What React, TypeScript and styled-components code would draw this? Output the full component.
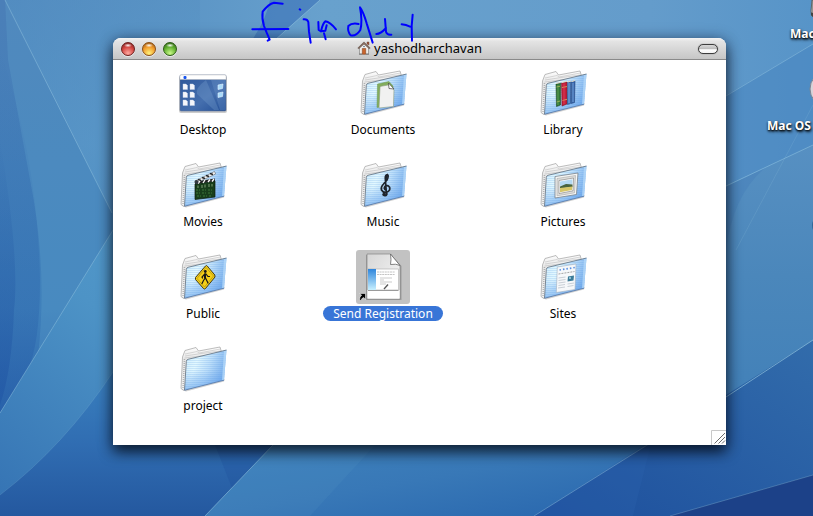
import React from "react";
import styled, { createGlobalStyle } from "styled-components";

const GlobalStyle = createGlobalStyle`
  * { box-sizing: border-box; }
  html, body { margin: 0; height: 100%; }
  body { font-family: "Noto Sans", "Open Sans", sans-serif; font-size: 12px; overflow: hidden; }
  #root { height: 100%; }
`;

const Desktop = styled.main`
  position: relative;
  min-height: 100vh;
  overflow: hidden;
  padding: 38px 87px 71px 113px;
  background: #3b78b6;
`;

const WallpaperArt = styled.svg`
  position: absolute;
  inset: 0;
  width: 100%;
  height: 100%;
`;

const HiddenDefs = styled.svg`
  position: absolute;
`;

const Window = styled.section`
  position: relative;
  background: #fff;
  border-radius: 8px 8px 0 0;
  box-shadow: 0 7px 14px rgba(0, 0, 0, 0.65), 0 2px 16px rgba(0, 10, 40, 0.4);
`;

const TitleBar = styled.header`
  display: grid;
  grid-template-columns: 1fr auto 1fr;
  align-items: center;
  height: 22px;
  padding: 0 8px;
  border-bottom: 1px solid #8a8a8a;
  border-radius: 8px 8px 0 0;
  background: linear-gradient(#f4f4f4, #e4e4e4 15%, #c6c6c6);
`;

const Lights = styled.div`
  display: flex;
  gap: 7px;
`;

const Light = styled.button<{ $dark: string; $mid: string; $glow: string }>`
  width: 14px;
  height: 14px;
  padding: 0;
  border: 1px solid ${(p) => p.$dark};
  border-radius: 50%;
  background:
    radial-gradient(ellipse 4px 2px at 50% 20%, rgba(255, 255, 255, 0.95), rgba(255, 255, 255, 0) 100%),
    radial-gradient(circle at 50% 85%, ${(p) => p.$glow}, ${(p) => p.$mid} 55%, ${(p) => p.$dark} 100%);
  box-shadow: 0 1px 0 rgba(255, 255, 255, 0.6);
`;

const Title = styled.h1`
  display: flex;
  align-items: center;
  gap: 3px;
  margin: 0;
  padding-bottom: 2px;
  font-size: 13px;
  line-height: 18px;
  font-weight: 400;
  color: #000;
`;

const ToolbarPill = styled.button`
  justify-self: end;
  width: 20px;
  height: 10px;
  padding: 0;
  border: 1px solid #3d3d3d;
  border-radius: 5px;
  background: linear-gradient(#d9d9d9, #bdbdbd 45%, #fff 60%, #f4f4f4);
  box-shadow: 0 0 1px #555;
`;

const IconGrid = styled.ul`
  display: grid;
  grid-template-columns: repeat(auto-fill, 180px);
  row-gap: 21px;
  margin: 0;
  padding: 6px 0 32px;
  list-style: none;
`;

const Cell = styled.li`
  display: flex;
  justify-content: center;
`;

const FileButton = styled.button`
  display: flex;
  flex-direction: column;
  align-items: center;
  gap: 2px;
  padding: 0;
  border: 0;
  background: none;
  font: inherit;
`;

const IconFrame = styled.span<{ $selected?: boolean }>`
  display: block;
  width: 54px;
  height: 54px;
  border-radius: 3px;
  background: ${(p) => (p.$selected ? "#c2c2c2" : "transparent")};
`;

const FileLabel = styled.span<{ $selected?: boolean }>`
  padding: 0 10px;
  border-radius: 8px;
  line-height: 15px;
  white-space: nowrap;
  color: ${(p) => (p.$selected ? "#fff" : "#000")};
  background: ${(p) => (p.$selected ? "#3875d7" : "transparent")};
`;

const ResizeCorner = styled.svg`
  position: absolute;
  right: 0;
  bottom: 0;
`;

const Scribble = styled.svg`
  position: absolute;
  left: 250px;
  top: 0;
  pointer-events: none;
`;

const Volume = styled.div<{ $top: number; $left: number }>`
  position: absolute;
  top: ${(p) => p.$top}px;
  left: ${(p) => p.$left}px;
  line-height: 16px;
  font-weight: 700;
  white-space: nowrap;
  color: #fff;
  text-shadow: 0 1px 2px #000, 1px 2px 3px rgba(0, 0, 0, 0.8);
`;

const VolumeArt = styled.svg`
  position: absolute;
  right: 0;
  top: 0;
`;

function Wallpaper() {
  return (
    <WallpaperArt viewBox="0 0 813 516" preserveAspectRatio="none" aria-hidden="true">
      <defs>
        <linearGradient id="wTop" x1="0" y1="0" x2="1" y2="0">
          <stop offset="0" stopColor="#4c86bd" />
          <stop offset=".4" stopColor="#68a1cd" />
          <stop offset=".8" stopColor="#649ccb" />
          <stop offset="1" stopColor="#5794c8" />
        </linearGradient>
        <linearGradient id="wLeft" x1="0" y1="0" x2="0" y2="1">
          <stop offset="0" stopColor="#4b7fb8" />
          <stop offset=".4" stopColor="#4480ba" />
          <stop offset=".75" stopColor="#3f80bb" />
          <stop offset="1" stopColor="#2d68ae" />
        </linearGradient>
        <linearGradient id="wMid" x1="0" y1="0" x2="0" y2="1">
          <stop offset="0" stopColor="#5791c3" />
          <stop offset=".6" stopColor="#5a9aca" />
          <stop offset="1" stopColor="#4f92c5" />
        </linearGradient>
        <linearGradient id="wArc" x1="0" y1="0" x2="0" y2="1">
          <stop offset="0" stopColor="#2a60a8" stopOpacity="0" />
          <stop offset=".5" stopColor="#2860a9" stopOpacity=".5" />
          <stop offset="1" stopColor="#2258a6" stopOpacity=".9" />
        </linearGradient>
        <linearGradient id="wBeam" x1="1" y1="0" x2="0" y2="1">
          <stop offset="0" stopColor="#5a9fcd" />
          <stop offset=".5" stopColor="#4d93c6" />
          <stop offset="1" stopColor="#3472b3" />
        </linearGradient>
        <linearGradient id="wBottomL" x1="0" y1="0" x2="0" y2="1">
          <stop offset="0" stopColor="#3a80be" />
          <stop offset=".5" stopColor="#306db2" />
          <stop offset="1" stopColor="#24589f" />
        </linearGradient>
        <linearGradient id="wBottomM" x1="0" y1="0" x2="1" y2="1">
          <stop offset="0" stopColor="#3f83bd" />
          <stop offset=".5" stopColor="#3878b7" />
          <stop offset="1" stopColor="#2765ad" />
        </linearGradient>
        <linearGradient id="wRight" x1="0" y1="0" x2="0" y2="1">
          <stop offset="0" stopColor="#5790c2" />
          <stop offset=".35" stopColor="#4b87bb" />
          <stop offset="1" stopColor="#3a7bb6" />
        </linearGradient>
        <linearGradient id="wDeep" x1="1" y1="0" x2="0" y2="1">
          <stop offset="0" stopColor="#326cab" />
          <stop offset="1" stopColor="#1d4f9d" />
        </linearGradient>
      </defs>
      <rect width="813" height="516" fill="url(#wTop)" />
      <path d="M5 0 112 213V240L0 413V0Z" fill="url(#wLeft)" />
      <path d="M5 0H200V240H112V213Z" fill="url(#wMid)" opacity=".55" />
      <path d="M0 50Q38 160 40 280Q40 345 27 372L0 413Z" fill="url(#wArc)" opacity=".45" />
      <path d="M0 140Q20 260 14 310Q12 370 0 405Z" fill="url(#wArc)" opacity=".8" />
      <path d="M112 213V232L38 355Q48 270 30 180L8 60 5 0Z" fill="#65a7cf" opacity=".25" />
      <path d="M113 230 0 413V516H205L350 360V230Z" fill="url(#wBeam)" />
      <path d="M113 372Q64 446 0 495V516H330V372Z" fill="url(#wBottomL)" />
      <path d="M273 445 205 516H560L660 440Z" fill="url(#wBottomM)" />
      <path d="M215 445 232 488 273 445Z" fill="#1c4d97" opacity=".25" />
      <path d="M375 445 310 516H205L273 445Z" fill="#65a4cf" opacity=".12" />
      <path d="M270 0H320L275 40H252Q266 20 270 0Z" fill="#3a72b8" opacity=".6" />
      <path d="M720 99 813 44V400H720Z" fill="#4584c0" opacity=".5" />
      <path d="M720 190 813 145V516H720Z" fill="url(#wRight)" />
      <path d="M726 250Q733 195 765 168L726 187Z" fill="#3a74b2" opacity=".25" />
      <path d="M813 340 534 516H813Z" fill="url(#wDeep)" />
      <path d="M652 440 633 516H534Z" fill="#2b62ad" opacity=".35" />
      <path d="M813 475 670 516H813Z" fill="#1c4188" />
      <g fill="none" stroke="#9fd0e6" strokeWidth="1">
        <path d="M5 0 112 213" opacity=".4" />
        <path d="M113 230 0 413" opacity=".4" />
        <path d="M113 372Q64 446 0 495" opacity=".15" />
        <path d="M320 0 275 40" opacity=".5" />
        <path d="M273 445 205 516" opacity=".5" />
        <path d="M660 437 534 516" opacity=".4" />
        <path d="M726 96 813 44" opacity=".4" />
        <path d="M726 186 813 145" opacity=".45" />
        <path d="M736 250 813 105" opacity=".15" />
        <path d="M726 397 813 340" opacity=".6" />
        <path d="M813 475 670 516" opacity=".3" />
      </g>
    </WallpaperArt>
  );
}

function SharedDefs() {
  return (
    <HiddenDefs width="0" height="0" aria-hidden="true">
      <defs>
        <linearGradient id="fFront" x1="0" y1="0" x2="1" y2=".35">
          <stop offset="0" stopColor="#cdebfc" />
          <stop offset=".35" stopColor="#e2f8ff" />
          <stop offset=".65" stopColor="#bcdefa" />
          <stop offset="1" stopColor="#7fb3ee" />
        </linearGradient>
        <linearGradient id="fShade" x1="0" y1="0" x2="0" y2="1">
          <stop offset=".5" stopColor="#5a9bea" stopOpacity="0" />
          <stop offset="1" stopColor="#5a9bea" stopOpacity=".55" />
        </linearGradient>
        <linearGradient id="fBack" x1="0" y1="0" x2="0" y2="1">
          <stop offset="0" stopColor="#fdfdfd" />
          <stop offset=".3" stopColor="#e6e6e6" />
          <stop offset="1" stopColor="#f2f2f2" />
        </linearGradient>
        <pattern id="fLines" width="4" height="2" patternUnits="userSpaceOnUse">
          <rect width="4" height="1" fill="#5b9ce0" opacity=".2" />
        </pattern>
        <linearGradient id="dBlue" x1="0" y1="0" x2="1" y2="1">
          <stop offset="0" stopColor="#2d5699" />
          <stop offset=".6" stopColor="#456fae" />
          <stop offset="1" stopColor="#234f96" />
        </linearGradient>
        <linearGradient id="pPage" x1="0" y1="0" x2="1" y2="1">
          <stop offset="0" stopColor="#d6d6d6" />
          <stop offset="1" stopColor="#fafafa" />
        </linearGradient>
        <linearGradient id="pStrip" x1="0" y1="0" x2="0" y2="1">
          <stop offset="0" stopColor="#2f86dc" />
          <stop offset="1" stopColor="#c8f0ff" />
        </linearGradient>
      </defs>
    </HiddenDefs>
  );
}

function Folder({ children }: { children?: React.ReactNode }) {
  return (
    <svg width="54" height="54" viewBox="0 0 54 54" aria-hidden="true">
      <path d="M6 48 10 49.500 48 39.500 49 37Z" fill="#000" opacity=".18" />
      <path
        d="M6.500 15 9 8.500 20 5.500 22.500 9 44 5 45.500 10 46 36 8 48.500 5 46.500Z"
        fill="url(#fBack)"
        stroke="#a0a0a0"
        strokeWidth=".7"
      />
      <path d="M9 12 21 9.500 23 11 44.500 7M9 14 22 12 44.500 9M8.500 16 44 11.500" fill="none" stroke="#bdbdbd" strokeWidth=".6" />
      <path d="M8.500 17 7 46" stroke="#7c7c7c" strokeWidth="1.500" strokeDasharray="1 1" opacity=".5" />
      <path d="M11 17.500 50.500 8 48 38 8.500 48Z" fill="url(#fFront)" />
      <path d="M11 17.500 50.500 8 48 38 8.500 48Z" fill="url(#fLines)" />
      <path d="M11 17.500 50.500 8 48 38 8.500 48Z" fill="url(#fShade)" />
      <path d="M48 8.800 50.500 8 48 38 46 38.400Z" fill="#b3d8f9" opacity=".8" />
      <path d="M8.500 48 10.300 19.500Q10.500 17.700 12 17.300L50.500 8" fill="none" stroke="#5c6c7c" strokeWidth=".8" />
      <path d="M8.500 48.200 48 38.200" stroke="#4a72aa" strokeWidth=".8" />
      {children}
    </svg>
  );
}

function DesktopIcon() {
  return (
    <svg width="54" height="54" viewBox="0 0 54 54" aria-hidden="true">
      <rect x="3" y="10" width="48" height="37" rx="2" fill="#000" opacity=".2" />
      <rect x="4" y="9" width="46" height="36" rx="1" fill="url(#dBlue)" stroke="#5b6f94" strokeWidth=".6" />
      <path d="M30 14Q19 22 21 28L38 44H43Z" fill="#8db3da" opacity=".25" />
      <path d="M35 14 44 44H49.500V14Z" fill="#7ba4d3" opacity=".25" />
      <path d="M4 10Q4 9 5 9H49Q50 9 50 10V13.500H4Z" fill="#fff" stroke="#b7b7b7" strokeWidth=".4" />
      <rect x="7.500" y="10" width="3" height="3" rx="1" fill="#1553f0" />
      {[18, 26, 34].map((y) =>
        [7, 14].map((x) => (
          <path key={`${x}-${y}`} d={`M${x} ${y}h3l1.500 1.500v4h-4.500Z`} fill="#f4f6fb" stroke="#c7d3e8" strokeWidth=".4" />
        ))
      )}
      {[18, 26].map((y) => (
        <path key={y} d={`M42 ${y + 1}l5-1-.5 4.500-4.500 1Z`} fill="#a9dbfb" stroke="#e4f4ff" strokeWidth=".6" />
      ))}
    </svg>
  );
}

function DocumentsIcon() {
  return (
    <Folder>
      <path d="M21.500 18 33 15.500 37 20 37 38 21 41.500Z" fill="#83ad5c" stroke="#6d9650" strokeWidth=".5" />
      <path d="M24 21.500Q24 20.500 25 20.300L32 19 38 23.500 37.500 40.500 23 42Z" fill="#f1f1f1" stroke="#8a9a80" strokeWidth=".6" />
      <path d="M32.500 17 33 22.500 38 23Z" fill="#fff" stroke="#444" strokeWidth=".7" />
    </Folder>
  );
}

function LibraryIcon() {
  return (
    <Folder>
      <path d="M20 18 24.500 17 24.500 39 20.500 40.500Z" fill="#2f7536" stroke="#1c4722" strokeWidth=".6" />
      <path d="M25.500 17 31 16 31 38 26 40Z" fill="#c4203c" stroke="#7b1022" strokeWidth=".6" />
      <path d="M31.700 16.500 34.700 15.800 34.500 37.500 31.500 38.500Z" fill="#4377bd" stroke="#234a84" strokeWidth=".6" />
      <path d="M35.500 16 39 15 38.500 36.500 35.300 37.500Z" fill="#3767ae" stroke="#203f78" strokeWidth=".6" />
      <path d="M20.500 21 24 20.200M20.700 36 24 35M26 21.500 31 20.500M26.500 34.500 31 33.300" stroke="#d9c862" strokeWidth=".7" />
      <path d="M22 19V39" stroke="#73b65f" strokeWidth=".7" />
      <path d="M28 18V38" stroke="#e0465f" strokeWidth=".7" />
      <path d="M33 17V37M37 17V36" stroke="#91b8e5" strokeWidth=".7" />
      <path d="M20 17.500 24 16.500M26 16.500 31 15.200M32 16 35 15M36 15.500 39 14.500" stroke="#e7ddc5" />
    </Folder>
  );
}

function MoviesIcon() {
  return (
    <Folder>
      <path d="M19 26 39 23 39 39 19 41.500Z" fill="#183e1b" stroke="#0c1b0d" strokeWidth=".7" />
      <path d="M20 32H38M20 35H37M21 38H36" stroke="#4f9048" strokeWidth=".7" strokeDasharray="2 1 1 2" />
      <path d="M22 30V27.500M26 30V27M29 29.500V26.500M33 29V26M36 28.500V26" stroke="#8aa982" strokeWidth=".9" />
      <path d="M19 23.500 39 20.500V23L19 26Z" fill="#222" />
      <path d="M19 23 38.500 13.500 39.500 16 20 25Z" fill="#fff" stroke="#444" strokeWidth=".5" />
      <path d="M22 21.500l3 1M26 19.500l3 1M30 17.500l3 1M34 15.500l3 1" stroke="#222" strokeWidth="1.600" />
      <path d="M22 25.500l2-2.500M27 25l2-3M32 24l2-2.500M36 23.500l2-2.500" stroke="#fff" strokeWidth="1.300" />
      <circle cx="20.500" cy="24" r="2" fill="#333b42" />
    </Folder>
  );
}

function MusicIcon() {
  return (
    <Folder>
      <g fill="none" stroke="#1e242c" strokeLinecap="round">
        <path d="M30.500 36.500 29.300 20.500Q29 17 31.500 16.500Q33 18 31 22L27.500 26Q24.500 29 25.500 32Q27 34.800 30.500 34.300Q34.500 33 33.700 29.500Q32 26.600 29 28.300Q27.200 30.500 29.700 32" strokeWidth="1.700" />
        <path d="M31.500 17.500Q29.500 19 30 22" strokeWidth="1.800" />
        <path d="M30.500 35Q31 38 28.500 37.300" strokeWidth="2" />
      </g>
      <circle cx="28" cy="36.500" r="1.700" fill="#1e242c" />
    </Folder>
  );
}

function PicturesIcon() {
  return (
    <Folder>
      <path d="M19 18.500 42 15 40.500 36.500 19 40Z" fill="#f6f6f4" stroke="#77818c" strokeWidth=".8" />
      <path d="M21 20.500 39.500 17.500 38.500 34.800 21 37.800Z" fill="#dededc" stroke="#a8a8a8" strokeWidth=".6" />
      <path d="M23 22.500 37.500 20 37 32.800 23 35.500Z" fill="#fff" stroke="#666" strokeWidth=".5" />
      <path d="M24 23.500 36.500 21.300V26.500L24 28Z" fill="#b5d9f2" />
      <path d="M24 28.500 30 26 36.500 26.500V29L24 30.500Z" fill="#48633e" />
      <path d="M24 30 36.500 28.500 36 32 24 34.300Z" fill="#d6c668" />
    </Folder>
  );
}

function PublicIcon() {
  return (
    <Folder>
      <path d="M30.500 15.500Q31.500 16 32 17L38.800 25 39 27 29.500 38.500Q28.500 39.500 27.500 38.500L19.500 29.500 19.500 27.500 29.500 16Z" fill="#f6cf18" stroke="#30290a" strokeWidth=".9" />
      <path d="M30 17.500 37.500 26 28.500 37 21 28.500Z" fill="none" stroke="#8b7414" strokeWidth=".5" />
      <circle cx="29.300" cy="21.500" r="1.400" fill="#171717" />
      <path d="M29 23.500 29.500 28 32 33M29.300 28 27.500 30.500 26 33.500M28.800 24 26 27 26.500 28M30 24 32 26.500 33.500 26.500" stroke="#171717" strokeWidth="1.200" fill="none" strokeLinecap="round" />
      <path d="M29 24V28.500" stroke="#171717" strokeWidth="2" />
    </Folder>
  );
}

function SitesIcon() {
  return (
    <Folder>
      <path d="M21.300 17 40 14 39 39.500 20.300 42.500Z" fill="#f6f8fa" stroke="#a3b0c0" strokeWidth=".6" />
      <path d="M23.500 20 39 17.500" stroke="#5a8fe2" strokeWidth="1.700" strokeDasharray="1.500 2" />
      <path d="M22.500 24 38.500 21.500" stroke="#a5a5a5" strokeWidth="1" strokeDasharray="2 1" />
      <path d="M22.500 28 29.500 27M22.500 30.500 29.500 29.500M22.500 33 29.500 32M22.500 35.500 29 34.500M22 38 29 37M31.500 34 38 33M31.500 36.500 37.500 35.500" stroke="#c3c9d1" strokeWidth=".9" />
      <path d="M32 26.500 38 25.500 37.500 30.500 31.500 31.500Z" fill="#3b7b98" />
      <circle cx="34" cy="28" r="1" fill="#a9d7e4" />
    </Folder>
  );
}

function RegistrationIcon() {
  return (
    <svg width="54" height="54" viewBox="0 0 54 54" aria-hidden="true">
      <path d="M10 5H35L45.500 16V50H10Z" fill="#000" opacity=".2" />
      <path d="M11 4H34.500L44 15.500V49H11Z" fill="url(#pPage)" stroke="#858585" strokeWidth=".7" />
      <path d="M11.500 40H43.500V48.500H11.500Z" fill="#fff" />
      <path d="M34.500 4Q35.500 10 34.500 14.500Q40 13.500 44 15.500Z" fill="#fff" stroke="#666" strokeWidth=".8" />
      <rect x="12" y="19" width="30.500" height="21" fill="#fff" stroke="#a9a9a9" strokeWidth=".6" />
      <rect x="12" y="19" width="8" height="21" fill="url(#pStrip)" />
      <path d="M21 22H39M21 24.500H39" stroke="#b5b5b5" strokeWidth=".8" strokeDasharray="2 .6" />
      <path d="M24 28H36M24 30H28M24 32H36M24 34H30" stroke="#aaa" strokeWidth=".6" />
      <path d="M28 39 32 34.500" stroke="#555" strokeWidth="1.300" />
      <path d="M12 40.500H42.500" stroke="#888" strokeWidth=".8" />
      <path d="M3.500 43.500H9.500V49.500L7.800 47.500Q5.500 48 5 50.500L3.500 50Q3.500 46.500 5.700 45.200Z" fill="#000" stroke="#fff" strokeWidth=".5" />
    </svg>
  );
}

function HomeIcon() {
  return (
    <svg width="14" height="14" viewBox="0 0 14 14" aria-hidden="true">
      <path d="M10 1H12V4L10 3Z" fill="#a2543a" stroke="#5e3c30" strokeWidth=".4" />
      <path d="M2.500 6 7 2 11.500 6V13H2.500Z" fill="#f0eeea" stroke="#777" strokeWidth=".6" />
      <path d="M.8 7 7 .9 13.200 7 12.200 7.700 7 3 1.800 7.700Z" fill="#8b6f62" stroke="#55443c" strokeWidth=".5" />
      <path d="M5.300 7.500H8.700V13.200H5.300Z" fill="#c9652c" stroke="#7b3919" strokeWidth=".5" />
      <circle cx="7" cy="5.500" r=".8" fill="#526d89" />
      <path d="M2 13.200H5M9 13.200H12" stroke="#777" strokeWidth="1" />
    </svg>
  );
}

const files = [
  { name: "Desktop", Icon: DesktopIcon },
  { name: "Documents", Icon: DocumentsIcon },
  { name: "Library", Icon: LibraryIcon },
  { name: "Movies", Icon: MoviesIcon },
  { name: "Music", Icon: MusicIcon },
  { name: "Pictures", Icon: PicturesIcon },
  { name: "Public", Icon: PublicIcon },
  { name: "Send Registration", Icon: RegistrationIcon, selected: true },
  { name: "Sites", Icon: SitesIcon },
  { name: "project", Icon: Folder },
];

export default function App() {
  return (
    <Desktop>
      <GlobalStyle />
      <Wallpaper />
      <SharedDefs />
      <VolumeArt width="6" height="240" viewBox="0 0 6 240" aria-hidden="true">
        <path d="M6 0H5L4 11 4.500 15.500 6 16.500Z" fill="#b9b9b9" stroke="#555" strokeWidth=".8" />
        <path d="M4 12.500 6 13V17L4 15Z" fill="#444" />
        <ellipse cx="17" cy="89" rx="14" ry="16" fill="#d8d3da" stroke="#7d8591" />
        <path d="M6 221Q4 225 6 230Z" fill="#2f6596" />
      </VolumeArt>
      <Volume $top={26} $left={790}>Mac</Volume>
      <Volume $top={118} $left={767}>Mac OS</Volume>
      <Window aria-label="yashodharchavan">
        <TitleBar>
          <Lights>
            <Light aria-label="Close" $dark="#6e1f1d" $mid="#d2443f" $glow="#ffa9a0" />
            <Light aria-label="Minimize" $dark="#8a4e14" $mid="#f09a2b" $glow="#fff27a" />
            <Light aria-label="Zoom" $dark="#2c5a16" $mid="#5fae2e" $glow="#c9f98a" />
          </Lights>
          <Title>
            <HomeIcon />
            yashodharchavan
          </Title>
          <ToolbarPill aria-label="Toggle toolbar" />
        </TitleBar>
        <IconGrid>
          {files.map(({ name, Icon, selected }) => (
            <Cell key={name}>
              <FileButton type="button">
                <IconFrame $selected={selected}>
                  <Icon />
                </IconFrame>
                <FileLabel $selected={selected}>{name}</FileLabel>
              </FileButton>
            </Cell>
          ))}
        </IconGrid>
        <ResizeCorner width="15" height="15" viewBox="0 0 15 15" aria-hidden="true">
          <path d="M.5 15V.5H15" fill="#fff" stroke="#c9c9c9" />
          <path d="M3.500 13.500 14 3M7.500 13.500 14 7M11 13.500 14 10.500" stroke="#6d6d6d" />
        </ResizeCorner>
      </Window>
      <Scribble width="170" height="45" viewBox="450 0 510 135" role="img" aria-label="Finder">
        <g fill="none" stroke="#0000ff" strokeWidth="6" strokeLinecap="round" strokeLinejoin="round">
          <path d="M548 11 522 8Q505 12 488 35Q485 55 492 78L500 98 509 119 503 122" />
          <path d="M457 88 565 87" />
          <path d="M599 28 601 29" />
          <path d="M611 58Q622 57 625 66L627 95 632 128" />
          <path d="M655 66 656 90 663 94Q668 70 676 64Q690 66 708 88M663 94 676 92 680 76M672 100 677 118" />
          <path d="M776 72Q755 68 745 78Q742 95 752 106Q768 110 781 90Q788 65 780 22Q790 35 800 70L818 128" />
          <path d="M855 57 858 95M829 102Q842 102 858 84M858 96Q862 106 874 104" />
          <path d="M905 73Q918 74 930 80M938 44 935 78 936 122" />
        </g>
      </Scribble>
    </Desktop>
  );
}
